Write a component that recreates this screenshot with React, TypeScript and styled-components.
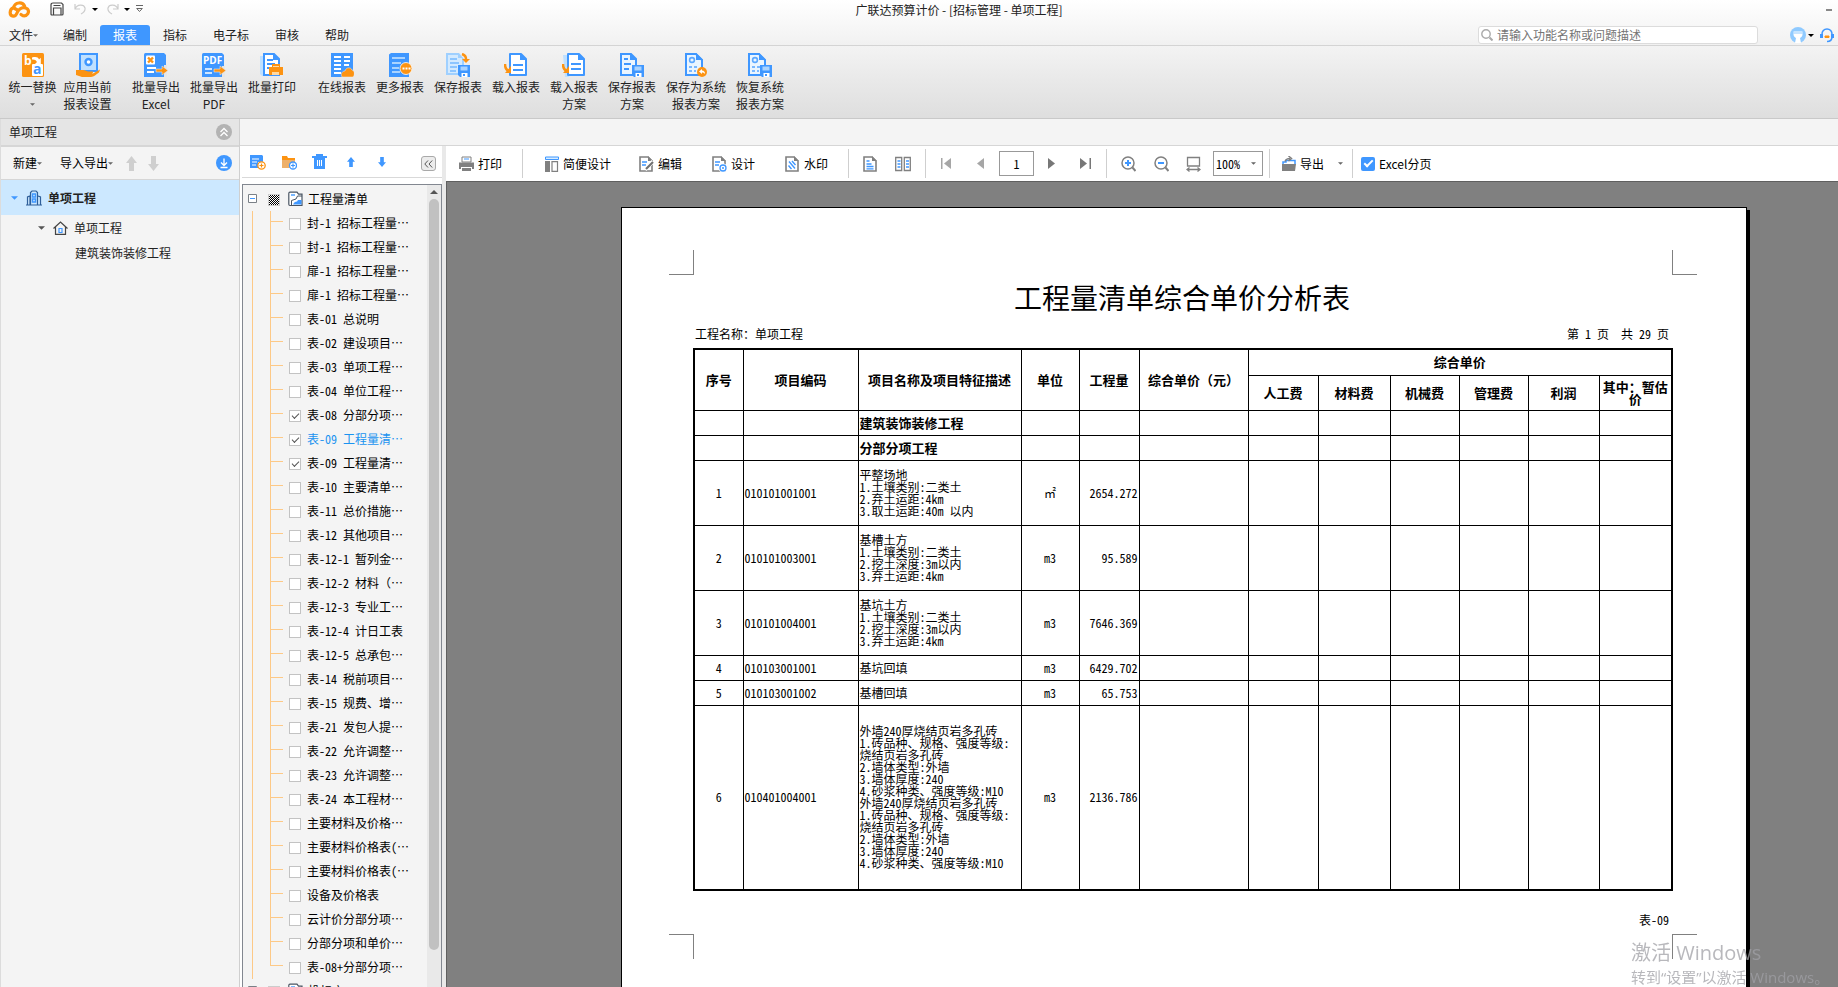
import React from "react";
import styled, { createGlobalStyle, css } from "styled-components";

const BLUE = "#3f97ff";
const ORANGE = "#fc9312";
const SKY = "#bfe0ff";

const Global = createGlobalStyle`
  *, *::before, *::after { box-sizing: border-box; }
  body {
    margin: 0;
    overflow: hidden;
    background: #f4f4f4;
    color: #222;
    font: 12px/16px "Noto Sans CJK SC", "Noto Sans", sans-serif;
  }
  button, input, select {
    margin: 0;
    padding: 0;
    border: 0;
    background: none;
    color: inherit;
    font: inherit;
  }
  ul { margin: 0; padding: 0; list-style: none; }
  svg { display: block; flex: none; }
`;

/* ---------- shell ---------- */

const Shell = styled.div`
  display: flex;
  flex-direction: column;
  height: 100vh;
  overflow: hidden;
`;

const Head = styled.header`
  flex: none;
  height: 46px;
  background: linear-gradient(#ffffff, #f1f1f1);
  border-bottom: 1px solid #d4d4d4;
`;

const TitleBar = styled.div`
  display: flex;
  align-items: center;
  height: 18px;
  padding-left: 8px;
`;

const QuickAccess = styled.div`
  display: flex;
  align-items: center;
  width: 134px;
`;

const QuickButton = styled.button<{ $gap?: number }>`
  display: flex;
  align-items: center;
  height: 18px;
  margin-left: ${(p) => p.$gap ?? 0}px;
`;

const AppTitle = styled.h1`
  flex: 1;
  margin: 0;
  padding-top: 2px;
  font-size: 12px;
  line-height: 18px;
  font-weight: 400;
  text-align: center;
`;

const WindowControls = styled.div`
  display: flex;
  justify-content: flex-end;
  width: 62px;
  padding-right: 6px;
`;

const MenuBar = styled.nav`
  display: flex;
  align-items: center;
  height: 27px;
  padding-top: 7px;
`;

const MenuItem = styled.button<{ $active?: boolean; $first?: boolean }>`
  display: flex;
  align-items: center;
  height: 20px;
  padding: 0 ${(p) => (p.$first ? "12px 0 9px" : "13px")};
  border-radius: 3px 3px 0 0;
  ${(p) =>
    p.$active &&
    css`
      background: ${BLUE};
      color: #fff;
    `}
`;

const SearchBox = styled.label`
  display: flex;
  align-items: center;
  gap: 4px;
  width: 280px;
  height: 18px;
  margin-left: auto;
  padding-left: 2px;
  border: 1px solid #dcdcdc;
  border-radius: 3px;
  background: #fff;
`;

const SearchInput = styled.input`
  flex: 1;
  min-width: 0;
  height: 16px;
  outline: none;
  &::placeholder { color: #757575; }
`;

const Account = styled.div`
  display: flex;
  align-items: center;
  gap: 6px;
  padding: 0 4px 0 32px;
`;

const PlainButton = styled.button`
  display: flex;
  align-items: center;
  gap: 2px;
`;

/* ---------- ribbon ---------- */

const Ribbon = styled.div`
  display: flex;
  flex: none;
  height: 73px;
  padding: 7px 0 0 5px;
  background: linear-gradient(#f3f3f3, #dedede);
  border-bottom: 1px solid #c9c9c9;
`;

const RibbonButton = styled.button<{ $size?: "narrow" | "wide"; $apart?: boolean }>`
  display: flex;
  flex-direction: column;
  align-items: center;
  width: ${(p) => (p.$size === "wide" ? 70 : p.$size === "narrow" ? 55 : 58)}px;
  height: 62px;
  margin-left: ${(p) => (p.$apart ? 12 : 0)}px;
  line-height: 17px;
  white-space: pre-line;
  svg + span { margin-top: 1px; }
  span + svg { margin-top: 8px; }
`;

/* ---------- body ---------- */

const Body = styled.div`
  display: flex;
  flex: 1;
  min-height: 0;
`;

const Aside = styled.aside`
  display: flex;
  flex: none;
  flex-direction: column;
  width: 240px;
  border-left: 1px solid #dcdcdc;
  border-right: 1px solid #cfcfcf;
  background: #f4f4f4;
`;

const AsideHead = styled.div`
  display: flex;
  align-items: center;
  justify-content: space-between;
  height: 28px;
  padding: 0 7px 0 8px;
  background: #e5e5e5;
  border-bottom: 2px solid #d6d6d6;
`;

const AsideTools = styled.div`
  display: flex;
  align-items: center;
  height: 33px;
  padding: 0 7px 0 12px;
  border-bottom: 1px solid #d6d6d6;
  color: #000;
`;

const AsideTool = styled.button<{ $gap?: number; $end?: boolean }>`
  display: flex;
  align-items: center;
  margin-left: ${(p) => (p.$end ? "auto" : `${p.$gap ?? 0}px`)};
`;

const ProjectRow = styled.div<{ $depth: number; $selected?: boolean }>`
  display: flex;
  align-items: center;
  height: ${(p) => (p.$selected ? 35 : 25)}px;
  padding-left: ${(p) => [10, 37, 74][p.$depth]}px;
  background: ${(p) => (p.$selected ? "#cce8ff" : "transparent")};
  font-weight: ${(p) => (p.$selected ? 700 : 400)};
  svg + svg { margin-left: 8px; }
  svg + span { margin-left: 6px; }
`;

const Main = styled.main`
  display: flex;
  flex: 1;
  flex-direction: column;
  min-width: 0;
`;

const Strip = styled.div`
  flex: none;
  height: 27px;
  background: #f4f4f4;
  border-bottom: 1px solid #d6d6d6;
`;

const Panes = styled.div`
  display: flex;
  flex: 1;
  min-height: 0;
`;

const ReportPane = styled.section`
  display: flex;
  flex: none;
  flex-direction: column;
  width: 202px;
  padding-left: 2px;
  background: #fff;
`;

const ReportTools = styled.div`
  display: flex;
  flex: none;
  align-items: center;
  height: 32px;
  padding: 0 6px 0 8px;
  border-bottom: 1px solid #d9d9d9;
`;

const CollapseButton = styled.button`
  display: grid;
  place-items: center;
  width: 15px;
  height: 15px;
  margin: 4px 0 0 auto;
  border: 1px solid #a9a9a9;
  border-radius: 3px;
  background: #ececec;
`;

const TreeBox = styled.div`
  display: flex;
  flex: 1;
  min-height: 0;
  margin-top: 6px;
  border: 1px solid #828790;
  border-bottom: 0;
  background: #f4f4f4;
  color: #000;
  overflow: hidden;
`;

const TreeBody = styled.div`
  flex: 1;
  min-width: 0;
  padding-top: 2px;
`;

const TreeRoot = styled.div`
  display: flex;
  align-items: center;
  height: 24px;
  padding-left: 5px;
  svg + input { margin-left: 11px; }
  input + svg { margin-left: 8px; }
  label { margin-left: 5px; }
`;

const TreeChildren = styled.ul`
  margin-left: 9px;
  padding-left: 17px;
  border-left: 1px solid #fdc987;
`;

const TreeItem = styled.li<{ $current?: boolean }>`
  display: flex;
  align-items: center;
  gap: 6px;
  height: 24px;
  color: ${(p) => (p.$current ? "#1a93f0" : "#000")};
  white-space: pre;
  font-feature-settings: "hwid";
`;

const FullWidth = styled.span`
  font-feature-settings: normal;
`;

const Branch = styled.span<{ $last: boolean }>`
  align-self: flex-start;
  width: 13px;
  height: ${(p) => (p.$last ? 11 : 24)}px;
  border-left: 1px solid #fdc987;
  background: linear-gradient(#fdc987, #fdc987) 0 10px / 13px 1px no-repeat;
`;

const TreeCheck = styled.input`
  appearance: none;
  flex: none;
  display: grid;
  place-items: center;
  width: 12px;
  height: 12px;
  margin-top: 2px;
  border: 1px solid #c3c3c3;
  background: #fff;
  &:checked::after {
    content: "";
    width: 7px;
    height: 4px;
    margin-bottom: 2px;
    border-left: 1px solid #555;
    border-bottom: 1px solid #555;
    transform: rotate(-45deg);
  }
`;

const MixedCheck = styled(TreeCheck)`
  border-color: #ccc;
  background: repeating-conic-gradient(#000 0 25%, #fff 0 50%) 0 0 / 2px 2px;
`;

const ScrollTrack = styled.div`
  display: flex;
  flex-direction: column;
  align-items: center;
  width: 14px;
  padding-top: 5px;
  background: #e9e9e9;
`;

const ScrollThumb = styled.div`
  width: 10px;
  height: calc(100% - 46px);
  margin-top: 5px;
  border-radius: 5px;
  background: #c1c1c1;
`;

const Splitter = styled.div`
  flex: none;
  width: 4px;
  background: #e9e9e9;
`;

/* ---------- viewer ---------- */

const Viewer = styled.section`
  display: flex;
  flex: 1;
  flex-direction: column;
  min-width: 0;
  background: #808080;
`;

const ViewerTools = styled.div`
  display: flex;
  flex: none;
  align-items: center;
  height: 35px;
  padding-left: 13px;
  background: #fff;
  color: #000;
`;

const ToolButton = styled.button<{ $gap?: number }>`
  display: flex;
  align-items: center;
  gap: 4px;
  margin-left: ${(p) => p.$gap ?? 0}px;
`;

const Divider = styled.span<{ $before: number; $after: number }>`
  width: 1px;
  height: 29px;
  margin: 0 ${(p) => p.$after}px 0 ${(p) => p.$before}px;
  background: #cfcfcf;
`;

const PageInput = styled.input`
  width: 35px;
  height: 25px;
  margin: 0 14px 0 15px;
  border: 1px solid #999;
  text-align: center;
  font-feature-settings: "hwid";
`;

const ZoomBox = styled.div`
  display: flex;
  align-items: center;
  width: 50px;
  height: 25px;
  margin-left: 12px;
  padding: 0 6px 0 2px;
  border: 1px solid #999;
`;

const ZoomSelect = styled.select`
  appearance: none;
  flex: 1;
  min-width: 0;
  outline: none;
  font-feature-settings: "hwid";
`;

const CheckLabel = styled.label`
  display: flex;
  align-items: center;
  gap: 4px;
`;

const BlueCheck = styled.input`
  appearance: none;
  display: grid;
  place-items: center;
  width: 14px;
  height: 14px;
  border-radius: 2px;
  background: ${BLUE};
  &:checked::after {
    content: "";
    width: 9px;
    height: 5px;
    margin-bottom: 3px;
    border-left: 2px solid #fff;
    border-bottom: 2px solid #fff;
    transform: rotate(-45deg);
  }
`;

const Canvas = styled.div`
  flex: 1;
  min-height: 0;
  padding: 25px 0 0 174px;
  border-top: 1px solid #5f5f5f;
  border-left: 1px solid #5f5f5f;
  overflow: hidden;
`;

const Paper = styled.article`
  width: 1126px;
  min-height: 1000px;
  padding-top: 42px;
  border: 1px solid #000;
  background: #fff;
  box-shadow: 3px 3px 0 #000;
  color: #000;
`;

const MarkRow = styled.div`
  display: flex;
  justify-content: space-between;
  height: 25px;
  padding: 0 49px 0 47px;
`;

const Mark = styled.span<{ $side: "left" | "right"; $edge: "top" | "bottom" }>`
  width: 25px;
  ${(p) => (p.$side === "left" ? "border-right" : "border-left")}: 1px solid #808080;
  ${(p) => (p.$edge === "top" ? "border-bottom" : "border-top")}: 1px solid #808080;
`;

const Sheet = styled.div`
  padding: 0 75px 0 71px;
`;

const SheetTitle = styled.h2`
  margin: 2px 0 0;
  font-size: 28px;
  line-height: 40px;
  font-weight: 400;
  text-align: center;
`;

const SheetMeta = styled.div`
  display: flex;
  justify-content: space-between;
  margin: 9px 0 6px;
  padding: 0 2px;
  white-space: pre;
  font-feature-settings: "hwid";
`;

const SheetFoot = styled.div`
  height: 43px;
  padding: 21px 2px 0 0;
  text-align: right;
  font-feature-settings: "hwid";
`;

const Table = styled.table`
  width: 100%;
  table-layout: fixed;
  border-collapse: collapse;
  border: 2px solid #000;
`;

const Row = styled.tr<{ $h: number }>`
  height: ${(p) => p.$h}px;
`;

const Th = styled.th`
  padding: 0;
  border: 1px solid #000;
  font-size: 13px;
  line-height: 12px;
  font-weight: 700;
`;

const Td = styled.td<{ $align?: "left" | "center" | "right"; $bold?: boolean }>`
  padding: 0 1px;
  border: 1px solid #000;
  font-size: ${(p) => (p.$bold ? 13 : 12)}px;
  line-height: 12px;
  text-align: ${(p) => p.$align ?? "left"};
  font-weight: ${(p) => (p.$bold ? 700 : 400)};
  font-feature-settings: "hwid";
  white-space: pre;
`;

const Watermark = styled.div`
  position: fixed;
  right: 0;
  bottom: -1px;
  width: 207px;
  color: rgba(160, 160, 165, 0.75);
  font-family: "Open Sans", "Noto Sans CJK SC", sans-serif;
  pointer-events: none;
  p { margin: 0; font-size: 15px; line-height: 22px; white-space: nowrap; }
  p:first-child { font-size: 20px; line-height: 27px; }
`;

/* ---------- icons ---------- */

const Caret = ({ color = "#666", w = 5 }: { color?: string; w?: number }) => (
  <svg width={w} height={Math.ceil(w / 2)} viewBox="0 0 6 3">
    <path d="M0 0h6L3 3z" fill={color} />
  </svg>
);

const Logo = () => (
  <svg width="23" height="17" viewBox="0 0 23 17" fill="none" stroke={ORANGE} strokeWidth="3.2" strokeLinecap="round">
    <path d="M8.500 8.500 5.500 6.800C1.500 8 .8 14.600 5.200 15.200 9.500 15.500 8.200 10.500 11.500 8.300c3-2.200 5.500-2.200 8-.2 2.500 3-.5 7.500-4.500 6.700l-2-1.300" />
    <path d="M5.600 6.500C7 1 14.500.5 16.500 5" />
  </svg>
);

const Ic24 = ({ children }: { children: React.ReactNode }) => (
  <svg width="24" height="24" viewBox="0 0 24 24" fill="none">{children}</svg>
);

const SmallText = styled.text`
  font-family: "Open Sans", sans-serif;
  font-weight: 700;
`;

const OutArrow = () => <path d="M12 16h6v-3l6 4.500-6 4.500v-3h-6z" fill={ORANGE} stroke="#e6e6e6" strokeWidth=".6" />;

const Floppy = () => (
  <g>
    <path d="M12 12h12v12H14l-2-2z" fill={BLUE} />
    <path d="M14.500 13.500h7v4h-7z" fill="#a9d3ff" />
    <path d="M15.500 20h6v4h-6z" fill="#fff" />
    <path d="M17 21h2v2h-2z" fill={BLUE} />
  </g>
);

const PageShape = ({ x = 0 }: { x?: number }) => (
  <g transform={`translate(${x} 0)`}>
    <path d="M2 1h11l5 5v16H2z" fill="#fff" stroke={BLUE} strokeWidth="2" strokeLinejoin="round" />
    <path d="M12 0l7 7h-7z" fill={BLUE} />
  </g>
);

const DownHook = () => (
  <g>
    <path d="M1 11c0 4 1 6 4 7" stroke={ORANGE} strokeWidth="2.500" />
    <path d="M7 13v7H1z" fill={ORANGE} />
  </g>
);

const icons: Record<string, React.ReactNode> = {
  replace: (
    <Ic24>
      <rect x="1" width="22" height="24" rx="1.500" fill={ORANGE} />
      <SmallText x="3" y="12" fontSize="12" fill="#fff">b</SmallText>
      <path d="M11 4.500c4-1 6-.5 7 2l1.800-1.800V11H14l2-2c-1-2-2.500-2.700-5-2.500z" fill="#fff" />
      <rect x="11" y="11" width="11" height="12" rx="1" fill="#fff" />
      <SmallText x="12" y="21" fontSize="14" fill={BLUE}>a</SmallText>
    </Ic24>
  ),
  apply: (
    <Ic24>
      <rect x="4" y="1" width="17" height="17" fill={SKY} stroke={BLUE} strokeWidth="2" />
      <circle cx="12.500" cy="9" r="3" stroke={BLUE} strokeWidth="2.400" fill="#fff" />
      <path d="M0 17h7c2 0 3 1 5 1.500h4c2 0 1 2-1 2h-4 6l7-4-1 3c-3 2-5 4.500-8 4.500H6L0 22z" fill={ORANGE} />
    </Ic24>
  ),
  excel: (
    <Ic24>
      <path d="M0 1.500Q0 0 1.500 0H20l2 2v22H0z" fill={BLUE} />
      <path d="M20 12v12h3V12z" fill="#e7e7e7" />
      <rect x="2" y="2.500" width="9" height="9" rx="1" fill="#fff" />
      <path d="M4 4.500l5 5m0-5l-5 5" stroke={ORANGE} strokeWidth="2.400" />
      <path d="M3 15h9M3 19h7" stroke="#fff" strokeWidth="2" />
      <OutArrow />
    </Ic24>
  ),
  pdf: (
    <Ic24>
      <path d="M0 1.500Q0 0 1.500 0H20l2 2v22H0z" fill={BLUE} />
      <path d="M20 13v11h3V13z" fill="#e7e7e7" />
      <SmallText x="1" y="11" fontSize="10" fill="#fff">PDF</SmallText>
      <path d="M3 16h7M3 20h7" stroke="#cfe6ff" strokeWidth="2" />
      <OutArrow />
    </Ic24>
  ),
  print: (
    <Ic24>
      <path d="M0 3h6v20H2L0 21z" fill={SKY} />
      <g transform="translate(2 0)">
        <path d="M2 1h10l5 5v16H2z" fill="#fff" stroke={BLUE} strokeWidth="2" />
        <path d="M11 0l7 7h-7z" fill={BLUE} />
      </g>
      <path d="M7 7h6M7 11h8M7 15h3" stroke={BLUE} strokeWidth="2" />
      <path d="M9 14h3v-3h8v3h3v8H9z" fill={ORANGE} />
      <path d="M12 19h7v3h-7zM13 13h6v1h-6z" fill="#ffd9a3" />
    </Ic24>
  ),
  online: (
    <Ic24>
      <path d="M1 0h22v24H1z" fill={BLUE} />
      <path d="M4 4h7M4 8h7M4 12h7M4 16h7M4 20h7M14 4h6M14 8h6M14 12h5" stroke="#fff" strokeWidth="2" />
      <path d="M12 24c-2-4 1-6 3-6 1-4 6-4 7-1 3 1 3 5 1 7z" fill={ORANGE} stroke="#eee" strokeWidth=".5" />
    </Ic24>
  ),
  more: (
    <Ic24>
      <path d="M1 1.500L3 0h18v24H1z" fill={BLUE} />
      <path d="M4 5h13M4 10h9M4 15h7M4 19h8" stroke="#a9d3ff" strokeWidth="2" />
      <circle cx="18" cy="15.500" r="6" fill={ORANGE} stroke="#fff" strokeWidth=".8" />
      <path d="M14.500 15.500h2m1 0h2m1 0h2" stroke="#fff" strokeWidth="1.800" />
    </Ic24>
  ),
  save: (
    <Ic24>
      <path d="M0 0h13l5 6v16H0z" fill="#9fd0ff" />
      <path d="M2 2h10v3h4v15H2z" fill="#d3eaff" />
      <path d="M4 6h7M4 10h9M4 14h7M4 18h6" stroke="#8cc5ff" strokeWidth="2" />
      <path d="M16 1c3 1 4 3 4 5" stroke={ORANGE} strokeWidth="2.500" />
      <path d="M16 6h8l-4 4z" fill={ORANGE} />
      <Floppy />
    </Ic24>
  ),
  load: (
    <Ic24>
      <PageShape x={4} />
      <path d="M9 12h10M9 17h10" stroke={BLUE} strokeWidth="2" />
      <DownHook />
    </Ic24>
  ),
  loadPlan: (
    <Ic24>
      <path d="M1 2h6v22H3z" fill={SKY} />
      <PageShape x={4} />
      <path d="M9 11h10M9 16h10" stroke={BLUE} strokeWidth="2" />
      <DownHook />
    </Ic24>
  ),
  savePlan: (
    <Ic24>
      <path d="M1 1h10l5 5v16H1z" fill="#eaf5ff" stroke={BLUE} strokeWidth="2" />
      <path d="M10 0l7 7h-7z" fill={BLUE} />
      <path d="M4 6h4M4 11h7M4 16h5" stroke={BLUE} strokeWidth="2" />
      <Floppy />
    </Ic24>
  ),
  saveSystem: (
    <Ic24>
      <path d="M2 1h10l6 6v15H2z" fill="#eaf5ff" stroke={BLUE} strokeWidth="2" />
      <path d="M12 0l7 7h-7z" fill={BLUE} />
      <circle cx="8" cy="7" r="2.400" stroke="#5ca8ff" strokeWidth="1.600" />
      <path d="M5 14h3m2 0h3M5 18h3m2 0h2" stroke="#7ab8ff" strokeWidth="2" />
      <circle cx="18" cy="19" r="5" fill={ORANGE} />
      <path d="M15 18.500l3-2.500v1.500c2 0 3 1.500 3 3.500-1-1.300-2-1.500-3-1.500V21z" fill="#fff" />
    </Ic24>
  ),
  restore: (
    <Ic24>
      <path d="M1 1h10l6 6v15H1z" fill="#eaf5ff" stroke={BLUE} strokeWidth="2" />
      <path d="M11 0l7 7h-7z" fill={BLUE} />
      <circle cx="7" cy="7" r="2.400" stroke="#5ca8ff" strokeWidth="1.600" />
      <path d="M4 14h3m2 0h3M4 18h3m2 0h2" stroke="#7ab8ff" strokeWidth="2" />
      <Floppy />
    </Ic24>
  ),
};

const Ic16 = ({ w = 15, children }: { w?: number; children: React.ReactNode }) => (
  <svg width={w} height="16" viewBox={`0 0 ${w} 16`} fill="none">{children}</svg>
);

const GrayPage = ({ children }: { children?: React.ReactNode }) => (
  <Ic16>
    <path d="M1 1h8l4 4v10H1z" fill="#fff" stroke="#808080" strokeWidth="1.600" />
    <path d="M9 0l5 5H9z" fill="#808080" />
    {children}
  </Ic16>
);

const Disc = ({ color, children }: { color: string; children: React.ReactNode }) => (
  <Ic16 w={16}>
    <circle cx="8" cy="8" r="8" fill={color} />
    {children}
  </Ic16>
);

const FatArrow = ({ down, color, w = 11 }: { down?: boolean; color: string; w?: number }) => (
  <svg width={w} height={w === 11 ? 15 : 10} viewBox="0 0 11 15" preserveAspectRatio="none">
    <path d={down ? "M3 0h5v8h3l-5.500 7L0 8h3z" : "M3 15h5V7h3L5.500 0 0 7h3z"} fill={color} />
  </svg>
);

const Lens = ({ plus }: { plus?: boolean }) => (
  <Ic16>
    <circle cx="7" cy="7" r="6" stroke="#808080" strokeWidth="1.500" />
    <path d="M11.500 11.500l3 3.500" stroke="#808080" strokeWidth="2" />
    <path d={plus ? "M4 7h6M7 4v6" : "M4 7h6"} stroke={BLUE} strokeWidth="2" />
  </Ic16>
);

const Triangle = ({ left, bar, color }: { left?: boolean; bar?: boolean; color: string }) => (
  <svg width={bar ? 11 : 8} height="11" viewBox={`0 0 ${bar ? 11 : 8} 11`} fill={color}>
    {left ? (
      <>
        <path d={bar ? "M10 0v11L3 5.500z" : "M8 0v11L1 5.500z"} />
        {bar && <path d="M0 0h1.500v11H0z" />}
      </>
    ) : (
      <>
        <path d="M0 0v11l7-5.500z" />
        {bar && <path d="M9.500 0H11v11H9.500z" />}
      </>
    )}
  </svg>
);

const FolderSheet = () => (
  <Ic16>
    <path d="M2 14.500c-.8 0-1.200-.4-1.200-1.200V2.500C.8 1.700 1.200 1.200 2 1.200h7l1.500 2H14v11.300z" fill="#fff" stroke="#4a5563" strokeWidth="1.200" />
    <path d="M3 5V3h4v2z" fill="#7ab8ff" />
    <path d="M3.500 14V9.500L8 8l1.500-3H14" stroke="#4a5563" />
    <path d="M5 13.500c1-2 2-3 4-3l1-1.500h3.500v4.500z" fill={BLUE} />
  </Ic16>
);

/* ---------- data ---------- */

const menus = ["编制", "报表", "指标", "电子标", "审核", "帮助"];

const ribbon: { icon: string; label: string; size?: "narrow" | "wide"; apart?: boolean; menu?: boolean }[] = [
  { icon: "replace", label: "统一替换", size: "narrow", menu: true },
  { icon: "apply", label: "应用当前\n报表设置", size: "narrow" },
  { icon: "excel", label: "批量导出\nExcel", apart: true },
  { icon: "pdf", label: "批量导出\nPDF" },
  { icon: "print", label: "批量打印" },
  { icon: "online", label: "在线报表", apart: true },
  { icon: "more", label: "更多报表" },
  { icon: "save", label: "保存报表" },
  { icon: "load", label: "载入报表" },
  { icon: "loadPlan", label: "载入报表\n方案" },
  { icon: "savePlan", label: "保存报表\n方案" },
  { icon: "saveSystem", label: "保存为系统\n报表方案", size: "wide" },
  { icon: "restore", label: "恢复系统\n报表方案" },
];

const reports: { name: string; checked?: boolean; current?: boolean }[] = [
  { name: "封-1 招标工程量…" },
  { name: "封-1 招标工程量…" },
  { name: "扉-1 招标工程量…" },
  { name: "扉-1 招标工程量…" },
  { name: "表-01 总说明" },
  { name: "表-02 建设项目…" },
  { name: "表-03 单项工程…" },
  { name: "表-04 单位工程…" },
  { name: "表-08 分部分项…", checked: true },
  { name: "表-09 工程量清…", checked: true, current: true },
  { name: "表-09 工程量清…", checked: true },
  { name: "表-10 主要清单…" },
  { name: "表-11 总价措施…" },
  { name: "表-12 其他项目…" },
  { name: "表-12-1 暂列金…" },
  { name: "表-12-2 材料（…" },
  { name: "表-12-3 专业工…" },
  { name: "表-12-4 计日工表" },
  { name: "表-12-5 总承包…" },
  { name: "表-14 税前项目…" },
  { name: "表-15 规费、增…" },
  { name: "表-21 发包人提…" },
  { name: "表-22 允许调整…" },
  { name: "表-23 允许调整…" },
  { name: "表-24 本工程材…" },
  { name: "主要材料及价格…" },
  { name: "主要材料价格表(…" },
  { name: "主要材料价格表(…" },
  { name: "设备及价格表" },
  { name: "云计价分部分项…" },
  { name: "分部分项和单价…" },
  { name: "表-08+分部分项…" },
];

const wall =
  "外墙240厚烧结页岩多孔砖\n1.砖品种、规格、强度等级:\n烧结页岩多孔砖\n2.墙体类型:外墙\n3.墙体厚度:240\n4.砂浆种类、强度等级:M10";

const columns = [49, 115, 163, 58, 60, 109, 70, 72, 69, 69, 71, 73];

const rows = [
  { h: 25, no: "", code: "", desc: "建筑装饰装修工程", unit: "", qty: "", bold: true },
  { h: 25, no: "", code: "", desc: "分部分项工程", unit: "", qty: "", bold: true },
  { h: 65, no: "1", code: "010101001001", desc: "平整场地\n1.土壤类别:二类土\n2.弃土运距:4km\n3.取土运距:40m 以内", unit: "㎡", qty: "2654.272" },
  { h: 65, no: "2", code: "010101003001", desc: "基槽土方\n1.土壤类别:二类土\n2.挖土深度:3m以内\n3.弃土运距:4km", unit: "m3", qty: "95.589" },
  { h: 65, no: "3", code: "010101004001", desc: "基坑土方\n1.土壤类别:二类土\n2.挖土深度:3m以内\n3.弃土运距:4km", unit: "m3", qty: "7646.369" },
  { h: 25, no: "4", code: "010103001001", desc: "基坑回填", unit: "m3", qty: "6429.702" },
  { h: 25, no: "5", code: "010103001002", desc: "基槽回填", unit: "m3", qty: "65.753" },
  { h: 185, no: "6", code: "010401004001", desc: `${wall}\n${wall}`, unit: "m3", qty: "2136.786" },
];

/* ---------- parts ---------- */

const TopBar = () => (
  <Head>
    <TitleBar>
      <QuickAccess>
        <Logo />
        <QuickButton $gap={19} aria-label="保存">
          <svg width="14" height="14" viewBox="0 0 14 14" fill="none" stroke="#444" strokeWidth="1.200">
            <path d="M1 3Q1 1 3 1h8.500L13 2.500V12q0 1-1 1H2q-1 0-1-1zM3.500 13V6h7.500v7M3.500 3.500h7" />
          </svg>
        </QuickButton>
        <QuickButton $gap={10} aria-label="撤销">
          <svg width="12" height="12" viewBox="0 0 12 12" fill="none" stroke="#ccc" strokeWidth="1.200">
            <path d="M1 1v5h5M1 6c2-5 9-5 10-1 .5 3-2 5-4 6" />
          </svg>
        </QuickButton>
        <QuickButton $gap={6} aria-label="撤销列表"><Caret color="#000" w={6} /></QuickButton>
        <QuickButton $gap={9} aria-label="重做">
          <svg width="12" height="12" viewBox="0 0 12 12" fill="none" stroke="#ccc" strokeWidth="1.200">
            <path d="M11 1v5H6M11 6C9 1 2 1 1 5c-.5 3 2 5 4 6" />
          </svg>
        </QuickButton>
        <QuickButton $gap={5} aria-label="重做列表"><Caret color="#000" w={6} /></QuickButton>
        <QuickButton $gap={6} aria-label="自定义">
          <svg width="7" height="8" viewBox="0 0 7 8" fill="none" stroke="#666">
            <path d="M0 .5h7M.7 3.500h5.600L3.500 6.500z" />
          </svg>
        </QuickButton>
      </QuickAccess>
      <AppTitle>广联达预算计价 - [招标管理 - 单项工程]</AppTitle>
      <WindowControls>
        <PlainButton aria-label="最小化">
          <svg width="6" height="6" viewBox="0 0 6 6"><path d="M0 3h6v2H0z" fill="#888" /></svg>
        </PlainButton>
      </WindowControls>
    </TitleBar>
    <MenuBar>
      <MenuItem $first>文件<Caret /></MenuItem>
      {menus.map((m) => (
        <MenuItem key={m} $active={m === "报表"}>{m}</MenuItem>
      ))}
      <SearchBox>
        <svg width="12" height="12" viewBox="0 0 12 12" fill="none" stroke="#aaa" strokeWidth="1.400">
          <circle cx="5" cy="5" r="4.200" />
          <path d="M8.500 8.500l3 3" strokeWidth="2" />
        </svg>
        <SearchInput placeholder="请输入功能名称或问题描述" />
      </SearchBox>
      <Account>
        <PlainButton aria-label="账号">
          <svg width="16" height="16" viewBox="0 0 16 16">
            <circle cx="8" cy="8" r="8" fill="#8fcaff" />
            <path d="M3.500 4.500h9v3c0 2-1.500 3-2.500 3.500l1 5H5l1-5C5 10.500 3.500 9.500 3.500 7.500z" fill="#fff" />
            <path d="M3.500 6h9" stroke="#8fcaff" />
          </svg>
          <Caret color="#000" w={6} />
        </PlainButton>
        <PlainButton aria-label="客服">
          <svg width="14" height="16" viewBox="0 0 14 16" fill="none" stroke={BLUE}>
            <path d="M2 8C1 0 13 0 12 8" strokeWidth="1.600" />
            <path d="M1.500 7v4M12.500 7v4" strokeWidth="3" />
            <path d="M12 10c0 3-2 4.500-5 4.500" strokeWidth="1.600" />
            <path d="M5 9h4v1.500H5z" fill={ORANGE} stroke={ORANGE} />
          </svg>
        </PlainButton>
      </Account>
    </MenuBar>
  </Head>
);

const ProjectPanel = () => (
  <Aside>
    <AsideHead>
      单项工程
      <PlainButton aria-label="收起">
        <Disc color="#b3b3b3">
          <path d="M4.500 8L8 4.500 11.500 8M4.500 12L8 8.500l3.500 3.500" stroke="#fff" strokeWidth="1.300" />
        </Disc>
      </PlainButton>
    </AsideHead>
    <AsideTools>
      <AsideTool>新建<Caret /></AsideTool>
      <AsideTool $gap={18}>导入导出<Caret /></AsideTool>
      <AsideTool $gap={13} aria-label="上移"><FatArrow color="#cfcfcf" /></AsideTool>
      <AsideTool $gap={11} aria-label="下移"><FatArrow down color="#cfcfcf" /></AsideTool>
      <AsideTool $end aria-label="下载">
        <Disc color={BLUE}>
          <path d="M8 3.500V10M5 7.500l3 3 3-3M4.500 12.500h7" stroke="#fff" strokeWidth="1.300" />
        </Disc>
      </AsideTool>
    </AsideTools>
    <ProjectRow $depth={0} $selected>
      <Caret color={BLUE} w={7} />
      <svg width="16" height="16" viewBox="0 0 16 16" fill="none" stroke="#2f5f9a" strokeWidth="1.200">
        <path d="M1.500 15V7L4 6v9M4.500 15V2.500L6 1h4l1.500 1.500V15M12 6l2.500 1v8M0 15h16" />
        <path d="M6.500 4h3v3h-3zM6.500 9h3v3h-3z" stroke={BLUE} strokeWidth="1.500" />
      </svg>
      <span>单项工程</span>
    </ProjectRow>
    <ProjectRow $depth={1}>
      <Caret color="#555" w={7} />
      <svg width="15" height="14" viewBox="0 0 15 14" fill="none" stroke="#444" strokeWidth="1.200">
        <path d="M.5 7.500l7-6.500 7 6.500M2.500 6v7.300h10V6" />
        <path d="M6 7.500h3v4H6z" stroke={BLUE} />
      </svg>
      <span>单项工程</span>
    </ProjectRow>
    <ProjectRow $depth={2}>建筑装饰装修工程</ProjectRow>
  </Aside>
);

const TreeToggle = () => (
  <svg width="9" height="10" viewBox="0 0 9 10">
    <path d="M.5.5h8v8h-8z" fill="#fff" stroke="#7a8087" />
    <path d="M2 4.500h5" stroke={BLUE} />
  </svg>
);

const ReportName = ({ text }: { text: string }) => {
  const [head, tail] = text.split("（");
  if (tail === undefined) return <>{text}</>;
  return (
    <>
      {head}
      <FullWidth>（</FullWidth>
      {tail}
    </>
  );
};

const ReportPanel = () => (
  <ReportPane>
    <ReportTools>
      <ToolButton aria-label="新建报表">
        <Ic16 w={16}>
          <path d="M0 1h12l1 1v6H8v6H0z" fill={BLUE} />
          <path d="M2 5h7M2 8h5M2 11h4" stroke="#fff" strokeWidth="1.200" />
          <circle cx="11.500" cy="11.500" r="3.700" fill="#fff" stroke={ORANGE} strokeWidth="1.300" />
          <path d="M9.500 11.500h4m-2-2v4" stroke={ORANGE} strokeWidth="1.200" />
        </Ic16>
      </ToolButton>
      <ToolButton $gap={16} aria-label="新建分组">
        <Ic16>
          <path d="M0 2h5l1 2h7v2H0z" fill={ORANGE} />
          <path d="M0 6h13v8H0z" fill="#eeb06a" />
          <circle cx="11" cy="11.500" r="3.500" fill="#fff" stroke={BLUE} strokeWidth="1.300" />
          <path d="M9 11.500h4m-2-2v4" stroke={BLUE} strokeWidth="1.200" />
        </Ic16>
      </ToolButton>
      <ToolButton $gap={15} aria-label="删除">
        <Ic16>
          <path d="M0 2h4V0h7v2h4v2h-2v11H2V4H0z" fill={BLUE} />
          <path d="M5.500 6v6m2-6v6m2-6v6" stroke="#fff" />
        </Ic16>
      </ToolButton>
      <ToolButton $gap={20} aria-label="上移"><FatArrow color={BLUE} w={8} /></ToolButton>
      <ToolButton $gap={23} aria-label="下移"><FatArrow down color={BLUE} w={8} /></ToolButton>
      <CollapseButton aria-label="折叠">
        <svg width="9" height="8" viewBox="0 0 9 8" fill="none" stroke="#555"><path d="M4 .5L.8 4 4 7.500M8.200.5L5 4l3.200 3.500" /></svg>
      </CollapseButton>
    </ReportTools>
    <TreeBox>
      <TreeBody>
        <TreeRoot>
          <TreeToggle />
          <MixedCheck type="checkbox" id="root" />
          <FolderSheet />
          <label htmlFor="root">工程量清单</label>
        </TreeRoot>
        <TreeChildren>
          {reports.map((r, i) => (
            <TreeItem key={i} $current={r.current}>
              <Branch $last={i === reports.length - 1} />
              <TreeCheck type="checkbox" id={`report-${i}`} defaultChecked={r.checked} />
              <label htmlFor={`report-${i}`}><ReportName text={r.name} /></label>
            </TreeItem>
          ))}
        </TreeChildren>
        <TreeRoot>
          <TreeToggle />
          <MixedCheck type="checkbox" id="bid" />
          <FolderSheet />
          <label htmlFor="bid">投标方</label>
        </TreeRoot>
      </TreeBody>
      <ScrollTrack>
        <svg width="8" height="4" viewBox="0 0 8 4"><path d="M0 4h8L4 0z" fill="#555" /></svg>
        <ScrollThumb />
      </ScrollTrack>
    </TreeBox>
  </ReportPane>
);

const ViewerBar = () => (
  <ViewerTools>
    <ToolButton>
      <Ic16>
        <path d="M3 1h9v5H3z" fill="#fff" stroke="#808080" />
        <path d="M5 3h5" stroke={BLUE} />
        <path d="M0 6.500h15V13h-2v-2H2v2H0zM3 12h9v3H3z" fill="#808080" />
      </Ic16>
      打印
    </ToolButton>
    <Divider $before={20} $after={22} />
    <ToolButton>
      <Ic16 w={14}>
        <path d="M.5 1h13v2.500H.5z" fill="#d8ecff" stroke={BLUE} />
        <path d="M0 5h5v11H0z" fill="#808080" />
        <path d="M7 5.600h5.500v9.800H7z" stroke="#808080" strokeWidth="1.200" />
      </Ic16>
      简便设计
    </ToolButton>
    <ToolButton $gap={28}>
      <GrayPage>
        <path d="M3 6h5M3 9h4" stroke={BLUE} strokeWidth="1.300" />
        <path d="M14 5.500L6 13.500" stroke="#fff" strokeWidth="4" />
        <path d="M14 6L7 13" stroke="#707070" strokeWidth="2.200" />
      </GrayPage>
      编辑
    </ToolButton>
    <ToolButton $gap={30}>
      <GrayPage>
        <path d="M3 6h5M3 9h4" stroke={BLUE} strokeWidth="1.300" />
        <circle cx="11" cy="12" r="4.500" fill="#fff" />
        <circle cx="11" cy="12" r="3" stroke={BLUE} strokeWidth="1.300" />
        <circle cx="11" cy="12" r="1" fill={BLUE} />
      </GrayPage>
      设计
    </ToolButton>
    <ToolButton $gap={30}>
      <GrayPage>
        <path d="M3.500 9.500l3 3.500M4 5.500l6 7M7 5l3.500 4" stroke={BLUE} strokeWidth="1.400" />
      </GrayPage>
      水印
    </ToolButton>
    <Divider $before={20} $after={14} />
    <ToolButton aria-label="单页">
      <GrayPage>
        <path d="M3.500 5h3M3.500 8h5M3.500 10.500h7M3.500 12.800h7" stroke={BLUE} strokeWidth="1.300" />
      </GrayPage>
    </ToolButton>
    <ToolButton $gap={17} aria-label="双页">
      <Ic16 w={16}>
        <path d="M.7 1.500h6v13h-6zM9.300 1.500h6v13h-6z" fill="#fff" stroke="#808080" strokeWidth="1.300" />
        <path d="M2.500 5h3m-3 3h3m-3 3h3M11 5h3m-3 3h3m-3 3h3" stroke={BLUE} strokeWidth="1.300" />
      </Ic16>
    </ToolButton>
    <Divider $before={14} $after={15} />
    <ToolButton aria-label="首页"><Triangle left bar color="#a6a6a6" /></ToolButton>
    <ToolButton $gap={24} aria-label="上一页"><Triangle left color="#a6a6a6" /></ToolButton>
    <PageInput defaultValue="1" aria-label="页码" />
    <ToolButton aria-label="下一页"><Triangle color="#777" /></ToolButton>
    <ToolButton $gap={24} aria-label="末页"><Triangle bar color="#777" /></ToolButton>
    <Divider $before={15} $after={14} />
    <ToolButton aria-label="放大"><Lens plus /></ToolButton>
    <ToolButton $gap={18} aria-label="缩小"><Lens /></ToolButton>
    <ToolButton $gap={17} aria-label="适合宽度">
      <Ic16>
        <path d="M1.500 1.500h12V10h-12zM1 13.500h13M3.500 11.500l-2.500 2 2.500 2M11.500 11.500l2.500 2-2.500 2" stroke="#808080" strokeWidth="1.300" />
      </Ic16>
    </ToolButton>
    <ZoomBox>
      <ZoomSelect defaultValue="100%" aria-label="缩放比例">
        <option>100%</option>
      </ZoomSelect>
      <Caret />
    </ZoomBox>
    <Divider $before={6} $after={12} />
    <ToolButton>
      <Ic16 w={14}>
        <path d="M1 8V6h3V4.500h9V8" stroke={BLUE} strokeWidth="1.500" />
        <path d="M3 5.500C4 2.500 6 2.500 8 2.500M6.500 0l3 2.500-3 2.500" stroke="#808080" strokeWidth="1.500" />
        <path d="M0 8h14l-1 7H0z" fill="#808080" />
      </Ic16>
      导出
    </ToolButton>
    <ToolButton $gap={14} aria-label="导出选项"><Caret /></ToolButton>
    <Divider $before={9} $after={8} />
    <CheckLabel>
      <BlueCheck type="checkbox" defaultChecked />
      Excel分页
    </CheckLabel>
  </ViewerTools>
);

const ReportSheet = () => (
  <Paper>
    <MarkRow>
      <Mark $side="left" $edge="top" />
      <Mark $side="right" $edge="top" />
    </MarkRow>
    <Sheet>
      <SheetTitle>工程量清单综合单价分析表</SheetTitle>
      <SheetMeta>
        <span>工程名称：单项工程</span>
        <span>{"第 1 页  共 29 页"}</span>
      </SheetMeta>
      <Table>
        <colgroup>
          {columns.map((w, i) => (
            <col key={i} width={w} />
          ))}
        </colgroup>
        <thead>
          <Row $h={26}>
            {["序号", "项目编码", "项目名称及项目特征描述", "单位", "工程量", "综合单价（元）"].map((h) => (
              <Th key={h} rowSpan={2}>{h}</Th>
            ))}
            <Th colSpan={6}>综合单价</Th>
          </Row>
          <Row $h={35}>
            {["人工费", "材料费", "机械费", "管理费", "利润", "其中：暂估价"].map((h) => (
              <Th key={h}>{h}</Th>
            ))}
          </Row>
        </thead>
        <tbody>
          {rows.map((r, i) => (
            <Row key={i} $h={r.h}>
              <Td $align="center">{r.no}</Td>
              <Td>{r.code}</Td>
              <Td $bold={r.bold}>{r.desc}</Td>
              <Td $align="center">{r.unit}</Td>
              <Td $align="right">{r.qty}</Td>
              {columns.slice(5).map((_, c) => (
                <Td key={c} />
              ))}
            </Row>
          ))}
        </tbody>
      </Table>
      <SheetFoot>表-09</SheetFoot>
    </Sheet>
    <MarkRow>
      <Mark $side="left" $edge="bottom" />
      <Mark $side="right" $edge="bottom" />
    </MarkRow>
  </Paper>
);

export default function App() {
  return (
    <>
      <Global />
      <Shell>
        <TopBar />
        <Ribbon>
          {ribbon.map((b) => (
            <RibbonButton key={b.icon} $size={b.size} $apart={b.apart}>
              {icons[b.icon]}
              <span>{b.label}</span>
              {b.menu && <Caret />}
            </RibbonButton>
          ))}
        </Ribbon>
        <Body>
          <ProjectPanel />
          <Main>
            <Strip />
            <Panes>
              <ReportPanel />
              <Splitter />
              <Viewer>
                <ViewerBar />
                <Canvas>
                  <ReportSheet />
                </Canvas>
              </Viewer>
            </Panes>
          </Main>
        </Body>
      </Shell>
      <Watermark>
        <p>激活 Windows</p>
        <p>转到“设置”以激活 Windows。</p>
      </Watermark>
    </>
  );
}
